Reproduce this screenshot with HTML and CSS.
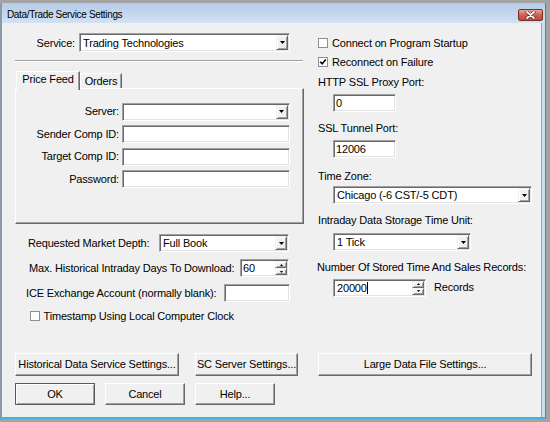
FILE: index.html
```html
<!DOCTYPE html>
<html>
<head>
<meta charset="utf-8">
<title>Data/Trade Service Settings</title>
<link rel="stylesheet" href="styles.css">
</head>
<body>
<div class="window">
  <div class="titlebar">
    <span class="title">Data/Trade Service Settings</span>
    <span class="close"><svg width="11" height="8" viewBox="0 0 11 8"><path d="M2 1 L9 7 M9 1 L2 7" stroke="#5a1a14" stroke-width="3" stroke-linecap="round"/><path d="M2 1 L9 7 M9 1 L2 7" stroke="#ffffff" stroke-width="1.8" stroke-linecap="round"/></svg></span>
  </div>
  <div class="client">
    <div class="columns">
      <div class="col-left">
        <div class="svc-row">
          <span class="svc-label">Service:</span>
          <div class="combo w-svc"><span class="val">Trading Technologies</span><span class="drop"><svg width="5" height="3" viewBox="0 0 5 3"><path d="M0 0H5L2.5 3Z"/></svg></span></div>
        </div>
        <div class="sep"></div>
        <div class="tabs">
          <div class="tab active">Price Feed</div>
          <div class="tab orders">Orders</div>
        </div>
        <div class="panel">
          <div class="prow"><span class="plabel">Server:</span><div class="combo w-p"><span class="val"></span><span class="drop"><svg width="5" height="3" viewBox="0 0 5 3"><path d="M0 0H5L2.5 3Z"/></svg></span></div></div>
          <div class="prow"><span class="plabel">Sender Comp ID:</span><div class="inp w-p"></div></div>
          <div class="prow"><span class="plabel">Target Comp ID:</span><div class="inp w-p"></div></div>
          <div class="prow"><span class="plabel">Password:</span><div class="inp w-p"></div></div>
        </div>
        <div class="lrow r-depth"><span>Requested Market Depth:</span><div class="combo w-depth"><span class="val">Full Book</span><span class="drop"><svg width="5" height="3" viewBox="0 0 5 3"><path d="M0 0H5L2.5 3Z"/></svg></span></div></div>
        <div class="lrow r-max"><span>Max. Historical Intraday Days To Download:</span><div class="spin w-max"><span class="val">60</span><span class="spinbtns"><span class="sb"><svg width="3" height="2" viewBox="0 0 3 2"><path d="M0 2H3L1.5 0Z"/></svg></span><span class="sb"><svg width="3" height="2" viewBox="0 0 3 2"><path d="M0 0H3L1.5 2Z"/></svg></span></span></div></div>
        <div class="lrow r-ice"><span>ICE Exchange Account (normally blank):</span><div class="inp w-ice"></div></div>
        <div class="cbrow r-ts"><span class="cb"></span><span>Timestamp Using Local Computer Clock</span></div>
      </div>
      <div class="col-right">
        <div class="cbrow c1"><span class="cb"></span><span>Connect on Program Startup</span></div>
        <div class="cbrow c2"><span class="cb"><svg width="8" height="8" viewBox="0 0 8 8"><path d="M1.2 3.8 L3.2 5.8 L6.8 1.6" fill="none" stroke="#000" stroke-width="1.6"/></svg></span><span>Reconnect on Failure</span></div>
        <div class="lbl l1">HTTP SSL Proxy Port:</div>
        <div class="inp port i1"><span class="val">0</span></div>
        <div class="lbl l2">SSL Tunnel Port:</div>
        <div class="inp port i2"><span class="val">12006</span></div>
        <div class="lbl l3">Time Zone:</div>
        <div class="combo tz"><span class="val">Chicago (-6 CST/-5 CDT)</span><span class="drop"><svg width="5" height="3" viewBox="0 0 5 3"><path d="M0 0H5L2.5 3Z"/></svg></span></div>
        <div class="lbl l4">Intraday Data Storage Time Unit:</div>
        <div class="combo tick"><span class="val">1 Tick</span><span class="drop"><svg width="5" height="3" viewBox="0 0 5 3"><path d="M0 0H5L2.5 3Z"/></svg></span></div>
        <div class="lbl l5">Number Of Stored Time And Sales Records:</div>
        <div class="spinrow">
          <div class="spin w-rec"><span class="val">20000<span class="caret"></span></span><span class="spinbtns"><span class="sb"><svg width="3" height="2" viewBox="0 0 3 2"><path d="M0 2H3L1.5 0Z"/></svg></span><span class="sb"><svg width="3" height="2" viewBox="0 0 3 2"><path d="M0 0H3L1.5 2Z"/></svg></span></span></div>
          <span class="records">Records</span>
        </div>
      </div>
    </div>
    <div class="btnrow r1">
      <div class="btn b-hist">Historical Data Service Settings...</div>
      <div class="btn b-sc">SC Server Settings...</div>
      <div class="btn b-large">Large Data File Settings...</div>
    </div>
    <div class="btnrow r2">
      <div class="btn b-ok">OK</div>
      <div class="btn b-cancel">Cancel</div>
      <div class="btn b-help">Help...</div>
    </div>
  </div>
</div>
</body>
</html>
```

FILE: styles.css
```css
* { box-sizing: border-box; }
html, body { margin: 0; padding: 0; }
body {
  width: 550px;
  height: 422px;
  overflow: hidden;
  background: #a3a3a3;
  font-family: "Liberation Sans", Arial, sans-serif;
  font-size: 11px;
  line-height: 13px;
  letter-spacing: -0.17px;
  color: #000;
}
.window {
  width: 546px;
  height: 416px;
  margin-top: 3px;
  border-left: 2px solid #8e99a6;
  border-right: 1px solid #6f7c8a;
  border-bottom: 2px solid #3db5df;
  background: #cddcee;
  display: flex;
  flex-direction: column;
}
.titlebar {
  height: 20px;
  flex: none;
  display: flex;
  align-items: flex-start;
  background: linear-gradient(#b4cae6, #d3e2f3);
}
.title {
  font-size: 10px;
  line-height: 12px;
  letter-spacing: -0.35px;
  margin: 6px 0 0 5px;
}
.close {
  width: 25px;
  height: 12px;
  margin: 6px 2px 0 auto;
  border: 1px solid #7a2b24;
  border-radius: 2px;
  background: linear-gradient(#e8a59b, #cf6155 50%, #c2483c);
  display: flex;
  align-items: center;
  justify-content: center;
}
.client {
  flex: 1;
  width: 540px;
  background: #f0f0f0;
  border-right: 1px solid #9aa5b2;
}
.columns {
  display: flex;
  height: 330px;
  padding-top: 10px;
}
.col-left { margin-left: 13px; width: 289px; }
.col-right { margin-left: 14px; width: 214px; }

/* controls */
.combo, .inp, .spin {
  display: flex;
  align-items: center;
  background: #fff;
  border: 1px solid;
  border-color: #a0a0a0 #ffffff #ffffff #a0a0a0;
  box-shadow: inset 1px 1px 0 #696969, inset -1px -1px 0 #e3e3e3;
  padding: 1px;
  height: 18px;
  flex: none;
}
.val {
  flex: 1;
  padding-left: 2px;
  padding-top: 1px;
  white-space: nowrap;
  overflow: hidden;
  display: flex;
  align-items: center;
}
.drop {
  width: 12px;
  align-self: stretch;
  background: #f0f0f0;
  border: 1px solid;
  border-color: #f0f0f0 #696969 #696969 #f0f0f0;
  box-shadow: inset 1px 1px 0 #ffffff, inset -1px -1px 0 #a0a0a0;
  display: flex;
  align-items: center;
  justify-content: center;
}
.drop svg, .sb svg { display: block; }
.spinbtns {
  width: 12px;
  align-self: stretch;
  display: flex;
  flex-direction: column;
}
.sb {
  flex: 1;
  background: #f0f0f0;
  border: 1px solid;
  border-color: #f0f0f0 #696969 #696969 #f0f0f0;
  box-shadow: inset 1px 1px 0 #ffffff, inset -1px -1px 0 #a0a0a0;
  display: flex;
  align-items: center;
  justify-content: center;
}
.caret {
  display: inline-block;
  width: 1px;
  height: 12px;
  background: #000;
  margin-left: 0;
}
.cb {
  width: 10px;
  height: 10px;
  flex: none;
  border: 1px solid #8e8f8f;
  background: #fff;
  margin-right: 4px;
  display: flex;
  align-items: center;
  justify-content: center;
}
.cb svg { display: block; }

/* left column */
.svc-row { display: flex; align-items: center; height: 19px; }
.svc-label { width: 60px; text-align: right; margin-right: 4px; padding-top: 1px; }
.w-svc { width: 211px; height: 19px; }
.sep {
  margin-top: 8px;
  width: 288px;
  height: 2px;
  border-top: 1px solid #a0a0a0;
  border-bottom: 1px solid #ffffff;
}
.tabs {
  margin-top: 9px;
  height: 17px;
  display: flex;
  align-items: flex-end;
  padding-left: 1px;
  position: relative;
  z-index: 1;
}
.tab {
  height: 15px;
  border: 1px solid;
  border-bottom: 0;
  border-color: #ffffff #696969 #696969 #ffffff;
  box-shadow: inset -1px 0 0 #a0a0a0;
  text-align: center;
  line-height: 14px;
  background: #f0f0f0;
}
.tab.active {
  width: 64px;
  height: 19px;
  margin-bottom: -2px;
  padding-top: 1px;
  line-height: 13px;
}
.tab.orders { width: 42px; }
.panel {
  height: 136px;
  border: 1px solid;
  border-color: #ffffff #696969 #696969 #ffffff;
  box-shadow: inset -1px -1px 0 #a0a0a0;
  padding-top: 13.5px;
  display: flex;
  flex-direction: column;
  gap: 4.5px;
}
.prow { display: flex; align-items: center; height: 18px; }
.plabel { width: 103px; text-align: right; margin-right: 2.5px; }
.w-p { width: 168px; }

.lrow {
  display: flex;
  align-items: center;
  justify-content: space-between;
  height: 18px;
  padding-right: 15px;
  white-space: nowrap;
}
.r-depth { margin-top: 10px; padding-left: 13px; }
.w-depth { width: 130px; }
.r-max { margin-top: 7px; padding-left: 14px; }
.w-max { width: 49px; }
.w-max .val { padding-left: 1px; }
.r-ice { margin-top: 7px; padding-left: 11px; padding-right: 14px; }
.w-ice { width: 66px; }
.cbrow { display: flex; align-items: center; height: 13px; white-space: nowrap; }
.r-ts { margin-top: 7.5px; padding-left: 14.5px; }

/* right column */
.c1 { margin-top: 3.5px; }
.c2 { margin-top: 6px; }
.lbl { height: 13px; white-space: nowrap; }
.l1 { margin-top: 7px; }
.port { margin-left: 15px; width: 63px; }
.port .val { padding-left: 1px; }
.i1 { margin-top: 5.5px; }
.l2 { margin-top: 10px; }
.i2 { margin-top: 5px; }
.l3 { margin-top: 11.5px; }
.tz { margin-top: 3.5px; margin-left: 15px; width: 199px; }
.l4 { margin-top: 10px; }
.tick { margin-top: 6px; margin-left: 15px; width: 138px; }
.l5 { margin-top: 10px; margin-left: -1px; }
.spinrow {
  margin-top: 4.5px;
  margin-left: 15px;
  display: flex;
  align-items: center;
  height: 18px;
}
.w-rec { width: 93px; }
.records { margin-left: 8px; }

/* buttons */
.btnrow { display: flex; padding-left: 13px; }
.r1 { height: 23px; }
.r2 { height: 22px; margin-top: 7px; }
.btn {
  height: 100%;
  background: #f0f0f0;
  border: 1px solid;
  border-color: #ffffff #696969 #696969 #ffffff;
  box-shadow: inset -1px -1px 0 #a0a0a0;
  display: flex;
  align-items: center;
  justify-content: center;
  white-space: nowrap;
}
.b-hist { width: 164px; }
.b-sc { width: 103px; margin-left: 16px; }
.b-large { width: 214px; margin-left: 20px; }
.b-ok {
  width: 80px;
  border-color: #5a5a5a;
  box-shadow: inset 1px 1px 0 #ffffff, inset -1px -1px 0 #a0a0a0;
}
.b-cancel { width: 80px; margin-left: 10px; }
.b-help { width: 80px; margin-left: 10px; }
```
